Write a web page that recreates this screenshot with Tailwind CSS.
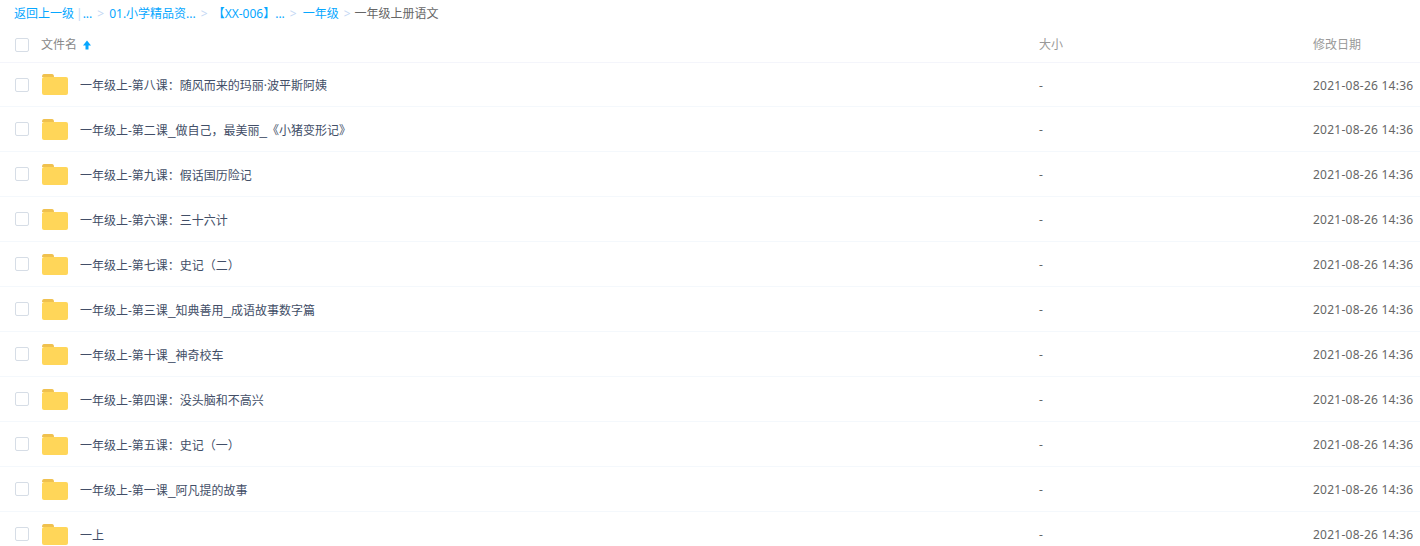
<!DOCTYPE html>
<html lang="zh">
<head>
<meta charset="UTF-8">
<title>文件列表</title>
<script src="https://cdn.jsdelivr.net/npm/@tailwindcss/browser@4"></script>
</head>
<body class="bg-white overflow-hidden font-['Noto_Sans','Noto_Sans_CJK_SC',sans-serif] text-[12px] text-[#424e67]">
<!-- breadcrumb -->
<nav class="h-[27px] pl-[14px] pt-[1px] flex items-center whitespace-nowrap text-[#06a7ff]">
  <span>返回上一级</span><span class="ml-[2px] text-[#c4d8f4]">|</span><span>...</span>
  <span class="mx-[5px] text-[#c4d8f4]">&gt;</span><span>01.小学精品资...</span>
  <span class="mx-[5px] text-[#c4d8f4]">&gt;</span><span>【XX-006】...</span>
  <span class="mx-[5px] text-[#c4d8f4]">&gt;</span><span class="ml-[1px]">一年级</span>
  <span class="ml-[5px] mr-[4px] text-[#c4d8f4]">&gt;</span><span class="text-[#666]">一年级上册语文</span>
</nav>
<!-- header -->
<div class="h-[36px] flex items-center border-b border-[#f4f5fb] text-[#888]">
  <span class="ml-[15px] w-[14px] h-[14px] rounded-[2px] border border-[#d6dde6]"></span>
  <div class="ml-[12px] w-[998px] flex items-center gap-[5px]"><span>文件名</span>
    <svg width="10" height="10" viewBox="0 0 10 10"><path d="M5 .5 9 5.5H6.5V9.5H3.5V5.5H1Z" fill="#06a7ff"/></svg>
  </div>
  <div class="w-[274px] text-[#999]">大小</div>
  <div class="text-[#999]">修改日期</div>
</div>
<!-- rows -->
<div id="rows">
  <div class="h-[44px] flex items-center border-b border-[#f4f8fc]"><span class="ml-[15px] w-[14px] h-[14px] rounded-[2px] border border-[#d6dde6]"></span><svg class="ml-[13px]" width="26" height="21" viewBox="0 0 26 21"><path d="M0 3Q0 0 2 0H10Q12 0 12 3Z" fill="#f0c14f"/><rect y="3" width="26" height="18" rx="2" fill="#ffd659"/></svg><div class="ml-[12px] w-[959px] pt-[3px]">一年级上-第八课：随风而来的玛丽·波平斯阿姨</div><div class="w-[274px] pt-[2px] text-[#666]">-</div><div class="pt-[2px] text-[#666] tracking-[0.25px]">2021-08-26 14:36</div></div>
  <div class="h-[45px] flex items-center border-b border-[#f4f8fc]"><span class="ml-[15px] w-[14px] h-[14px] rounded-[2px] border border-[#d6dde6]"></span><svg class="ml-[13px]" width="26" height="21" viewBox="0 0 26 21"><path d="M0 3Q0 0 2 0H10Q12 0 12 3Z" fill="#f0c14f"/><rect y="3" width="26" height="18" rx="2" fill="#ffd659"/></svg><div class="ml-[12px] w-[959px] pt-[3px]">一年级上-第二课<span class="font-['Liberation_Sans'] text-[13.5px] leading-none">_</span>做自己，最美丽<span class="font-['Liberation_Sans'] text-[13.5px] leading-none">_</span>《小猪变形记》</div><div class="w-[274px] pt-[2px] text-[#666]">-</div><div class="pt-[2px] text-[#666] tracking-[0.25px]">2021-08-26 14:36</div></div>
  <div class="h-[45px] flex items-center border-b border-[#f4f8fc]"><span class="ml-[15px] w-[14px] h-[14px] rounded-[2px] border border-[#d6dde6]"></span><svg class="ml-[13px]" width="26" height="21" viewBox="0 0 26 21"><path d="M0 3Q0 0 2 0H10Q12 0 12 3Z" fill="#f0c14f"/><rect y="3" width="26" height="18" rx="2" fill="#ffd659"/></svg><div class="ml-[12px] w-[959px] pt-[3px]">一年级上-第九课：假话国历险记</div><div class="w-[274px] pt-[2px] text-[#666]">-</div><div class="pt-[2px] text-[#666] tracking-[0.25px]">2021-08-26 14:36</div></div>
  <div class="h-[45px] flex items-center border-b border-[#f4f8fc]"><span class="ml-[15px] w-[14px] h-[14px] rounded-[2px] border border-[#d6dde6]"></span><svg class="ml-[13px]" width="26" height="21" viewBox="0 0 26 21"><path d="M0 3Q0 0 2 0H10Q12 0 12 3Z" fill="#f0c14f"/><rect y="3" width="26" height="18" rx="2" fill="#ffd659"/></svg><div class="ml-[12px] w-[959px] pt-[3px]">一年级上-第六课：三十六计</div><div class="w-[274px] pt-[2px] text-[#666]">-</div><div class="pt-[2px] text-[#666] tracking-[0.25px]">2021-08-26 14:36</div></div>
  <div class="h-[45px] flex items-center border-b border-[#f4f8fc]"><span class="ml-[15px] w-[14px] h-[14px] rounded-[2px] border border-[#d6dde6]"></span><svg class="ml-[13px]" width="26" height="21" viewBox="0 0 26 21"><path d="M0 3Q0 0 2 0H10Q12 0 12 3Z" fill="#f0c14f"/><rect y="3" width="26" height="18" rx="2" fill="#ffd659"/></svg><div class="ml-[12px] w-[959px] pt-[3px]">一年级上-第七课：史记（二）</div><div class="w-[274px] pt-[2px] text-[#666]">-</div><div class="pt-[2px] text-[#666] tracking-[0.25px]">2021-08-26 14:36</div></div>
  <div class="h-[45px] flex items-center border-b border-[#f4f8fc]"><span class="ml-[15px] w-[14px] h-[14px] rounded-[2px] border border-[#d6dde6]"></span><svg class="ml-[13px]" width="26" height="21" viewBox="0 0 26 21"><path d="M0 3Q0 0 2 0H10Q12 0 12 3Z" fill="#f0c14f"/><rect y="3" width="26" height="18" rx="2" fill="#ffd659"/></svg><div class="ml-[12px] w-[959px] pt-[3px]">一年级上-第三课<span class="font-['Liberation_Sans'] text-[13.5px] leading-none">_</span>知典善用<span class="font-['Liberation_Sans'] text-[13.5px] leading-none">_</span>成语故事数字篇</div><div class="w-[274px] pt-[2px] text-[#666]">-</div><div class="pt-[2px] text-[#666] tracking-[0.25px]">2021-08-26 14:36</div></div>
  <div class="h-[45px] flex items-center border-b border-[#f4f8fc]"><span class="ml-[15px] w-[14px] h-[14px] rounded-[2px] border border-[#d6dde6]"></span><svg class="ml-[13px]" width="26" height="21" viewBox="0 0 26 21"><path d="M0 3Q0 0 2 0H10Q12 0 12 3Z" fill="#f0c14f"/><rect y="3" width="26" height="18" rx="2" fill="#ffd659"/></svg><div class="ml-[12px] w-[959px] pt-[3px]">一年级上-第十课<span class="font-['Liberation_Sans'] text-[13.5px] leading-none">_</span>神奇校车</div><div class="w-[274px] pt-[2px] text-[#666]">-</div><div class="pt-[2px] text-[#666] tracking-[0.25px]">2021-08-26 14:36</div></div>
  <div class="h-[45px] flex items-center border-b border-[#f4f8fc]"><span class="ml-[15px] w-[14px] h-[14px] rounded-[2px] border border-[#d6dde6]"></span><svg class="ml-[13px]" width="26" height="21" viewBox="0 0 26 21"><path d="M0 3Q0 0 2 0H10Q12 0 12 3Z" fill="#f0c14f"/><rect y="3" width="26" height="18" rx="2" fill="#ffd659"/></svg><div class="ml-[12px] w-[959px] pt-[3px]">一年级上-第四课：没头脑和不高兴</div><div class="w-[274px] pt-[2px] text-[#666]">-</div><div class="pt-[2px] text-[#666] tracking-[0.25px]">2021-08-26 14:36</div></div>
  <div class="h-[45px] flex items-center border-b border-[#f4f8fc]"><span class="ml-[15px] w-[14px] h-[14px] rounded-[2px] border border-[#d6dde6]"></span><svg class="ml-[13px]" width="26" height="21" viewBox="0 0 26 21"><path d="M0 3Q0 0 2 0H10Q12 0 12 3Z" fill="#f0c14f"/><rect y="3" width="26" height="18" rx="2" fill="#ffd659"/></svg><div class="ml-[12px] w-[959px] pt-[3px]">一年级上-第五课：史记（一）</div><div class="w-[274px] pt-[2px] text-[#666]">-</div><div class="pt-[2px] text-[#666] tracking-[0.25px]">2021-08-26 14:36</div></div>
  <div class="h-[45px] flex items-center border-b border-[#f4f8fc]"><span class="ml-[15px] w-[14px] h-[14px] rounded-[2px] border border-[#d6dde6]"></span><svg class="ml-[13px]" width="26" height="21" viewBox="0 0 26 21"><path d="M0 3Q0 0 2 0H10Q12 0 12 3Z" fill="#f0c14f"/><rect y="3" width="26" height="18" rx="2" fill="#ffd659"/></svg><div class="ml-[12px] w-[959px] pt-[3px]">一年级上-第一课<span class="font-['Liberation_Sans'] text-[13.5px] leading-none">_</span>阿凡提的故事</div><div class="w-[274px] pt-[2px] text-[#666]">-</div><div class="pt-[2px] text-[#666] tracking-[0.25px]">2021-08-26 14:36</div></div>
  <div class="h-[45px] flex items-center border-b border-[#f4f8fc]"><span class="ml-[15px] w-[14px] h-[14px] rounded-[2px] border border-[#d6dde6]"></span><svg class="ml-[13px]" width="26" height="21" viewBox="0 0 26 21"><path d="M0 3Q0 0 2 0H10Q12 0 12 3Z" fill="#f0c14f"/><rect y="3" width="26" height="18" rx="2" fill="#ffd659"/></svg><div class="ml-[12px] w-[959px] pt-[3px]">一上</div><div class="w-[274px] pt-[2px] text-[#666]">-</div><div class="pt-[2px] text-[#666] tracking-[0.25px]">2021-08-26 14:36</div></div>
</div>
</body>
</html>
